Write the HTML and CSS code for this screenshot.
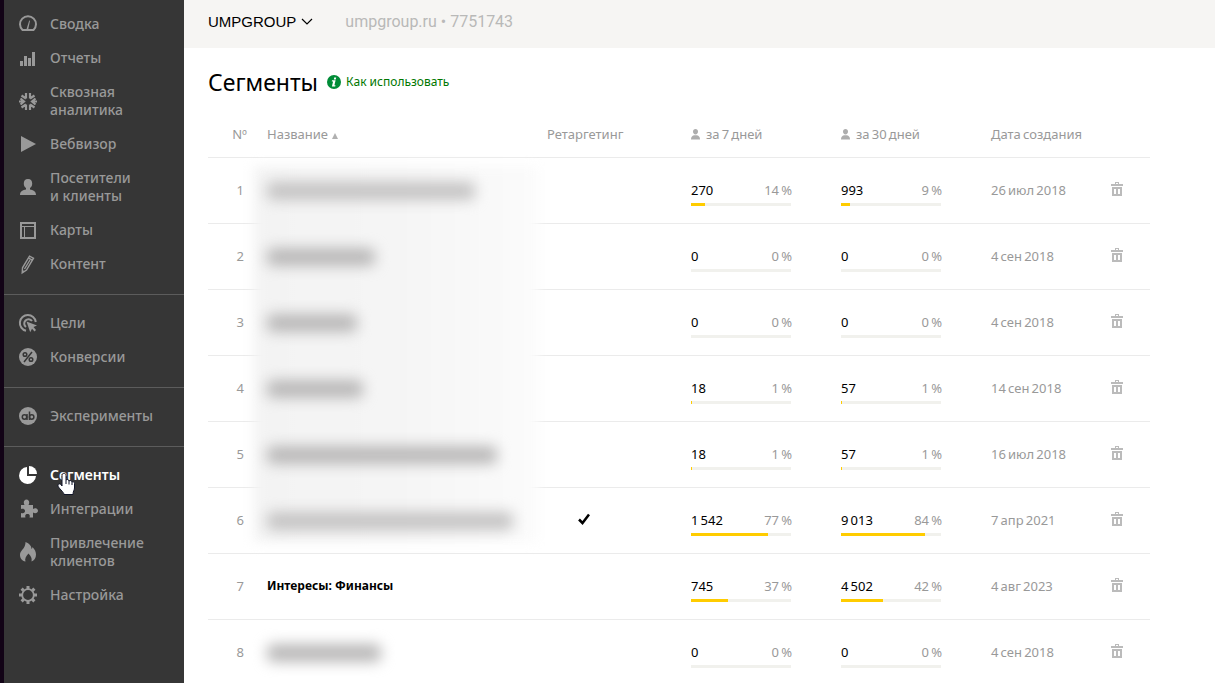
FILE: index.html
```html
<!DOCTYPE html>
<html lang="ru">
<head>
<meta charset="utf-8">
<title>Сегменты</title>
<link rel="stylesheet" href="styles.css">
</head>
<body>
<svg class="defs" aria-hidden="true">
  <symbol id="trash" viewBox="0 0 12 14"><path fill-rule="evenodd" d="M0 2h4V0h4v2h4v2H0zM5 1v1h2V1zM1 5h10v9H1zM3 7v5h2V7zM7 7v5h2V7z"/></symbol>
  <symbol id="person" viewBox="0 0 9 11"><path d="M4.500 0C6 0 7 1 7 2.600S6 5.500 4.500 5.500 2 4.200 2 2.600 3 0 4.500 0zM0 10.500C0 8 1 7 3 6.300h3C8 7 9 8 9 10.500z"/></symbol>
</svg>
<div class="app">
  <nav class="sidebar">
    <ul class="group">
      <li><a class="item" href="#"><svg viewBox="0 0 18 18"><path fill="none" stroke="currentColor" stroke-width="2" stroke-linejoin="round" d="M3.500 15A8 8 0 1 1 14.500 15z"/><path d="M10.200 5.500l.8.200L9.300 14H7.600z"/></svg><span>Сводка</span></a></li>
      <li><a class="item" href="#"><svg viewBox="0 0 18 18"><path d="M1 12h3v5H1zM5 7h3v10H5zM9 9h3v8H9zM13 3h3v14h-3z"/></svg><span>Отчеты</span></a></li>
      <li><a class="item" href="#"><svg viewBox="0 0 18 18"><g fill="none" stroke="currentColor" stroke-width="2.200"><path d="M7 1v5.500M2.500 3.500L7 6.500M11 1v5.500M15.500 3.500L11 6.500M7 18v-5.500M2.500 15.500L7 12.500M11 18v-5.500M15.500 15.500L11 12.500M0 9.500h5M1.500 6.500l3.500 3-3.500 3M18 9.500h-5M16.500 6.500l-3.500 3 3.500 3"/></g></svg><span>Сквозная<br>аналитика</span></a></li>
      <li><a class="item" href="#"><svg viewBox="0 0 18 18"><path d="M2 1l15 8-15 8z"/></svg><span>Вебвизор</span></a></li>
      <li><a class="item" href="#"><svg viewBox="0 0 18 18"><path d="M9 1c3 0 4.200 2 4.200 4.500 0 2-.8 3.500-2.200 4.500v1.500c3 .7 6 1.500 6 5.500H1c0-4 3-4.800 6-5.500V10C5.600 9 4.800 7.500 4.800 5.500 4.800 3 6 1 9 1z"/></svg><span>Посетители<br>и клиенты</span></a></li>
      <li><a class="item" href="#"><svg viewBox="0 0 18 18"><path fill-rule="evenodd" d="M1 1h16v17H1zM3 3v2h12V3zM3 6v10h2V6zM6 6v10h9V6z"/></svg><span>Карты</span></a></li>
      <li><a class="item" href="#"><svg viewBox="0 0 18 18"><g fill="none" stroke="currentColor" stroke-width="1.400"><path d="M10.500 1.200l4 2L7.500 15l-4.300 2.800.3-5z"/><path d="M9.500 3.200l4 2M11 5L5.500 14"/></g><path d="M3 14.500l2.500 1.800L3 18z"/></svg><span>Контент</span></a></li>
    </ul>
    <ul class="group">
      <li><a class="item" href="#"><svg viewBox="0 0 18 18"><g fill="none" stroke="currentColor" stroke-width="2"><path d="M7 16.800A8 8 0 1 1 16.800 8"/><path d="M7 13A4.300 4.300 0 1 1 13 7"/></g><path d="M7.500 7.500l10.500 4-3.500 1.500 2.500 3-1.500 1.500-2.500-2.800-1.800 3.500z"/></svg><span>Цели</span></a></li>
      <li><a class="item" href="#"><svg viewBox="0 0 18 18"><circle cx="9" cy="9" r="9"/><g class="cut"><circle cx="6" cy="6.500" r="1.800"/><circle cx="12" cy="11.500" r="1.800"/><path d="M13 4L5 14"/></g></svg><span>Конверсии</span></a></li>
    </ul>
    <ul class="group">
      <li><a class="item" href="#"><svg viewBox="0 0 18 18"><circle cx="9" cy="9" r="9"/><g class="cut"><circle cx="5.500" cy="10" r="2.200"/><path d="M8 7v6M10.500 4.500V13"/><circle cx="12.700" cy="10" r="2.200"/></g></svg><span>Эксперименты</span></a></li>
    </ul>
    <ul class="group">
      <li class="current"><a class="item active" href="#" aria-current="page"><svg viewBox="0 0 18 18"><path d="M8 1v9h9A8.500 8.500 0 1 1 8 1z"/><path d="M10 0a8 8 0 0 1 8 8h-8z"/></svg><span>Сегменты</span></a>
        <svg class="pointer" viewBox="0 0 18 24" aria-hidden="true"><path d="M5 13V3.500C5 .5 9 .5 9 3.500V8c1-1 3-.5 3 1 1-1 3-.3 3 1 1-.7 2.500 0 2.500 1.500V16c0 2-1.500 3-1.500 6.500H7C7 20 1 16 1 13.500 1 11.500 3.500 11 5 14z"/><path d="M9 8v4M12 9v3.500M15 10v3"/></svg></li>
      <li><a class="item" href="#"><svg viewBox="0 0 18 18"><path d="M2 5h3.500C4 2.500 5 -.5 7.500 -.5S11 2.500 9.500 5H14v4c2-1.500 5-.5 5 1.800s-3 3.200-5 1.700V17.500h-3.500c.8-2.500-.3-3.500-2-3.500s-2.800 1-2 3.500H2v-4.500c2.500.8 4-.3 4-2s-1.500-2.800-4-2z"/></svg><span>Интеграции</span></a></li>
      <li><a class="item" href="#"><svg viewBox="0 0 18 18"><path d="M6.500-1c4 1.500 6 4 6 7 .8-.5 1-1.300 1-2 2.500 2.500 3.500 5 3.500 7.500 0 3.500-1.800 6-4.500 7 .8-3.500-.8-5.500-3-8-2.500 3-4 5-3 8C3 18 1 15 1 12c0-3.500 2.500-5 4-7.500C6 2.700 6.500 1 6.500-1z"/></svg><span>Привлечение<br>клиентов</span></a></li>
      <li><a class="item" href="#"><svg viewBox="0 0 18 18"><g fill="none" stroke="currentColor"><circle cx="9" cy="9" r="5.800" stroke-width="1.800"/><path stroke-width="3" d="M9 0v3M9 15v3M0 9h3M15 9h3M2.600 2.600l2 2M13.400 13.400l2 2M2.600 15.400l2-2M13.400 4.600l2-2"/></g></svg><span>Настройка</span></a></li>
    </ul>
  </nav>
  <div class="page">
    <header class="topbar">
      <button class="counter" type="button">UMPGROUP<svg viewBox="0 0 12 8"><path d="M1 1l5 5 5-5"/></svg></button>
      <span class="site">umpgroup.ru • 7751743</span>
    </header>
    <main class="content">
      <div class="heading">
        <h1>Сегменты</h1>
        <a class="help" href="#"><svg viewBox="0 0 14 14"><circle cx="7" cy="7" r="7"/><path fill="#fff" d="M7.200 2.500h2L8.800 4.400h-2zM5 5.300h3.600l-1.200 5h1.100l-.3 1.200H4.900l1.200-5H4.800z"/></svg>Как использовать</a>
      </div>
      <div class="tablewrap">
        <table class="segments">
          <colgroup><col class="c-num"><col><col class="c-ret"><col class="c-val"><col class="c-val"><col class="c-date"><col class="c-del"></colgroup>
          <thead>
            <tr><th class="num">Nº</th><th>Название<svg class="sort" viewBox="0 0 6 6"><path d="M3 0l3 6H0z"/></svg></th><th>Ретаргетинг</th><th><svg class="user"><use href="#person"/></svg>за&#8201;7&#8201;дней</th><th><svg class="user"><use href="#person"/></svg>за&#8201;30&#8201;дней</th><th>Дата&#8201;создания</th><th></th></tr>
          </thead>
          <tbody>
            <tr><td class="num">1</td><td><span class="smear soft" style="width:208px"></span></td><td></td>
              <td><div class="value"><b>270</b><span>14&#8201;%</span></div><div class="bar"><i style="width:14%"></i></div></td>
              <td><div class="value"><b>993</b><span>9&#8201;%</span></div><div class="bar"><i style="width:9%"></i></div></td>
              <td>26&#8201;июл&#8201;2018</td><td><button class="del" type="button" aria-label="Удалить"><svg><use href="#trash"/></svg></button></td></tr>
            <tr><td class="num">2</td><td><span class="smear" style="width:108px"></span></td><td></td>
              <td><div class="value"><b>0</b><span>0&#8201;%</span></div><div class="bar"></div></td>
              <td><div class="value"><b>0</b><span>0&#8201;%</span></div><div class="bar"></div></td>
              <td>4&#8201;сен&#8201;2018</td><td><button class="del" type="button" aria-label="Удалить"><svg><use href="#trash"/></svg></button></td></tr>
            <tr><td class="num">3</td><td><span class="smear" style="width:90px"></span></td><td></td>
              <td><div class="value"><b>0</b><span>0&#8201;%</span></div><div class="bar"></div></td>
              <td><div class="value"><b>0</b><span>0&#8201;%</span></div><div class="bar"></div></td>
              <td>4&#8201;сен&#8201;2018</td><td><button class="del" type="button" aria-label="Удалить"><svg><use href="#trash"/></svg></button></td></tr>
            <tr><td class="num">4</td><td><span class="smear" style="width:96px"></span></td><td></td>
              <td><div class="value"><b>18</b><span>1&#8201;%</span></div><div class="bar"><i style="width:1%"></i></div></td>
              <td><div class="value"><b>57</b><span>1&#8201;%</span></div><div class="bar"><i style="width:1%"></i></div></td>
              <td>14&#8201;сен&#8201;2018</td><td><button class="del" type="button" aria-label="Удалить"><svg><use href="#trash"/></svg></button></td></tr>
            <tr><td class="num">5</td><td><span class="smear" style="width:230px"></span></td><td></td>
              <td><div class="value"><b>18</b><span>1&#8201;%</span></div><div class="bar"><i style="width:1%"></i></div></td>
              <td><div class="value"><b>57</b><span>1&#8201;%</span></div><div class="bar"><i style="width:1%"></i></div></td>
              <td>16&#8201;июл&#8201;2018</td><td><button class="del" type="button" aria-label="Удалить"><svg><use href="#trash"/></svg></button></td></tr>
            <tr><td class="num">6</td><td><span class="smear soft" style="width:246px"></span></td><td><svg class="check" viewBox="0 0 12 12"><path d="M1 6.500L4.500 10 11 1.500"/></svg></td>
              <td><div class="value"><b>1&#8201;542</b><span>77&#8201;%</span></div><div class="bar"><i style="width:77%"></i></div></td>
              <td><div class="value"><b>9&#8201;013</b><span>84&#8201;%</span></div><div class="bar"><i style="width:84%"></i></div></td>
              <td>7&#8201;апр&#8201;2021</td><td><button class="del" type="button" aria-label="Удалить"><svg><use href="#trash"/></svg></button></td></tr>
            <tr><td class="num">7</td><td class="name">Интересы: Финансы</td><td></td>
              <td><div class="value"><b>745</b><span>37&#8201;%</span></div><div class="bar"><i style="width:37%"></i></div></td>
              <td><div class="value"><b>4&#8201;502</b><span>42&#8201;%</span></div><div class="bar"><i style="width:42%"></i></div></td>
              <td>4&#8201;авг&#8201;2023</td><td><button class="del" type="button" aria-label="Удалить"><svg><use href="#trash"/></svg></button></td></tr>
            <tr><td class="num">8</td><td><span class="smear" style="width:114px"></span></td><td></td>
              <td><div class="value"><b>0</b><span>0&#8201;%</span></div><div class="bar"></div></td>
              <td><div class="value"><b>0</b><span>0&#8201;%</span></div><div class="bar"></div></td>
              <td>4&#8201;сен&#8201;2018</td><td><button class="del" type="button" aria-label="Удалить"><svg><use href="#trash"/></svg></button></td></tr>
          </tbody>
        </table>
        <div class="haze"></div>
      </div>
    </main>
  </div>
</div>
</body>
</html>
```

FILE: styles.css
```css
* { box-sizing: border-box; }

html, body { height: 100%; }

body {
  margin: 0;
  overflow: hidden;
  background: #fff;
  color: #000;
  font: 13px/20px "Noto Sans", sans-serif;
}

a { text-decoration: none; }
button { padding: 0; border: 0; background: none; font: inherit; color: inherit; }
svg { display: block; flex: none; fill: currentColor; }
.defs { display: none; }

.app { display: flex; height: 100%; }

/* Sidebar */
.sidebar {
  flex: none;
  width: 184px;
  border-left: 4px solid #120316;
  background: #363636;
}

.group { margin: 0; padding: 11px 0 13px; list-style: none; }
.group:first-child { padding-top: 7px; }
.group + .group { border-top: 1px solid #5c5c5c; }

.item {
  display: flex;
  align-items: center;
  gap: 13px;
  padding: 8px 0 8px 15px;
  color: #999;
  font-size: 14px;
  font-weight: 500;
  line-height: 18px;
}
.item svg { width: 18px; height: 18px; overflow: visible; }
.item.active { color: #fff; font-weight: 600; }
.cut { fill: none; stroke: #363636; stroke-width: 1.5; }

.current { position: relative; }
.pointer {
  position: absolute;
  top: 14px;
  left: 53px;
  width: 18px;
  height: 24px;
  fill: #fff;
  stroke: #111528;
}

/* Top bar */
.page { flex: 1; min-width: 0; }
.topbar {
  display: flex;
  align-items: center;
  gap: 32px;
  height: 48px;
  padding: 0 24px 4px;
  background: #f6f5f3;
  font-size: 15px;
}
.counter { display: flex; align-items: center; gap: 5px; font-family: "Liberation Sans", sans-serif; }
.counter svg { width: 12px; height: 8px; fill: none; stroke: #000; stroke-width: 1.2; }
.site { color: #b9b9b8; font-family: Roboto, sans-serif; font-size: 16px; }

/* Heading */
.content { padding: 18px 65px 0 24px; }
.heading { display: flex; align-items: center; gap: 9px; height: 32px; }
h1 { margin: 0; font-size: 23px; font-weight: 400; line-height: 32px; }
.help { display: flex; align-items: center; gap: 5px; color: #070; font-size: 12px; }
.help svg { width: 14px; height: 14px; fill: #008c37; }

/* Table */
.tablewrap { position: relative; margin-top: 12px; }
.segments {
  width: 100%;
  table-layout: fixed;
  border-collapse: separate;
  border-spacing: 0;
  color: #999;
}
.c-num { width: 59px; }
.c-ret { width: 144px; }
.c-val { width: 150px; }
.c-date { width: 120px; }
.c-del { width: 39px; }

th, td {
  padding: 0;
  border-bottom: 1px solid #ebebeb;
  text-align: left;
  font-weight: 400;
  white-space: nowrap;
}
th { height: 48px; }
td { height: 66px; padding-top: 22px; vertical-align: top; }
th.num, td.num { padding-right: 23px; text-align: right; }
th.num { padding-right: 20px; }
.sort { display: inline-block; width: 6px; height: 6px; margin-left: 4px; color: #b0b0b0; }
.user { display: inline-block; width: 9px; height: 11px; margin-right: 6px; color: #adadad; vertical-align: -1px; }
.name { color: #000; font-size: 12px; font-weight: 700; }

.value { display: flex; justify-content: space-between; width: 101px; }
.value b { color: #000; font-weight: 400; }
.bar { width: 100px; height: 3px; margin-top: 3px; background: #f1f1ed; }
.bar i { display: block; height: 100%; background: #fc0; }

.check { width: 12px; height: 12px; margin: 3px 0 0 31px; fill: none; stroke: #000; stroke-width: 2.5; }
.del { display: block; margin-top: 2px; color: #bbb; }
.del svg { width: 12px; height: 14px; }

/* Blurred names */
.haze {
  position: absolute;
  top: 56px;
  left: 46px;
  width: 284px;
  height: 376px;
  background: linear-gradient(90deg, #f3f3f3, #f5f5f5 50%, #fbfbfb);
  filter: blur(6px);
}
.smear {
  position: relative;
  z-index: 1;
  display: block;
  height: 18px;
  margin-top: 2px;
  border-radius: 6px;
  background: #b9b8b8;
  filter: blur(7px);
}
.smear.soft { background: #c4c3c3; }
```
